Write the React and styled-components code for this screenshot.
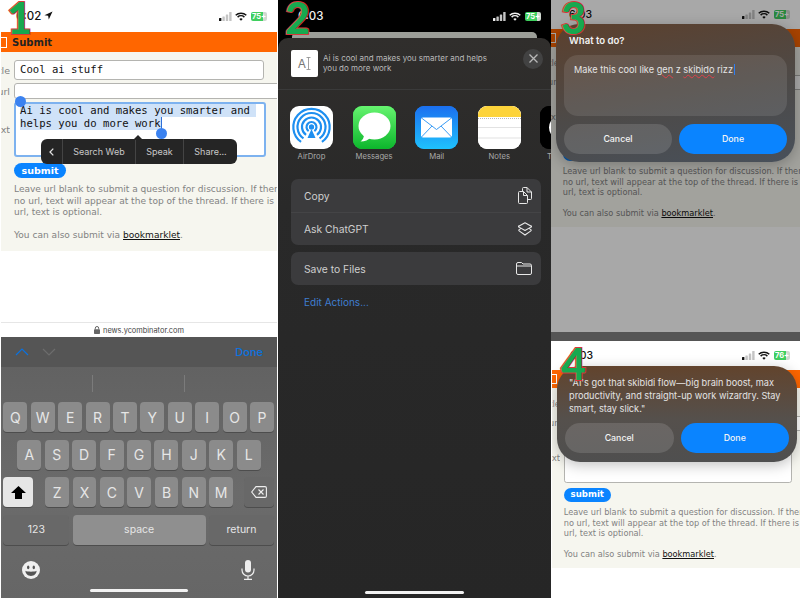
import styled, { createGlobalStyle } from 'styled-components'

const GlobalStyle = createGlobalStyle`
  html, body {
    margin: 0;
    width: 800px;
    height: 600px;
    overflow: hidden;
    background: #fff;
  }
  * { box-sizing: border-box; }
`

const ios = `Inter, "Liberation Sans", sans-serif`
const verdana = `"DejaVu Sans", Verdana, sans-serif`

const Screen = styled.div`
  display: flex;
  width: 800px;
  height: 600px;
  font-family: ${ios};
`
const Phone = styled.div`
  position: relative;
  display: flex;
  flex-direction: column;
  flex: none;
  width: ${p => p.$w}px;
  height: ${p => p.$h}px;
  margin-left: ${p => p.$left || 0}px;
  overflow: hidden;
  background: ${p => p.$bg || '#fff'};
`
const Column = styled.div`
  display: flex;
  flex-direction: column;
  flex: 1;
  height: 600px;
`
const Digit = styled.div`
  position: absolute;
  left: ${p => p.$x}px;
  top: ${p => p.$y}px;
  z-index: 5;
  font: 900 43px/43px Lato, "DejaVu Sans", sans-serif;
  color: #17a84f;
  -webkit-text-stroke: 2px #d8363a;
  paint-order: stroke fill;
`

/* status bar */
const Status = styled.div`
  display: flex;
  align-items: center;
  flex: none;
  height: ${p => p.$h}px;
  padding: 0 10px 0 ${p => p.$pad}px;
  color: ${p => p.$color};
  font-size: ${p => p.$size || 11.5}px;
  font-weight: 500;
  gap: 3px;
`
const Time = styled.span`
  margin-right: auto;
`
const Battery = styled.span`
  display: inline-block;
  width: 16px;
  height: 9px;
  border-radius: 2px;
  background: linear-gradient(90deg, #3fcf5e 78%, #cfd8d0 78%);
  color: #fff;
  font: 700 7.5px/9px ${ios};
  text-align: center;
  margin-left: 1px;
`

const Arrow = () => (
  <svg width="9" height="9" viewBox="0 0 10 10"><path d="M0.5 4.8 9.5 0.5 5.3 9.5 4.6 5.4Z" fill="currentColor" /></svg>
)
const Bars = ({ color }) => (
  <svg width="13" height="9" viewBox="0 0 13 9">
    <rect x="0" y="6" width="2.4" height="3" rx=".5" fill={color} />
    <rect x="3.4" y="4.4" width="2.4" height="4.6" rx=".5" fill="#c4c4c4" />
    <rect x="6.8" y="2.4" width="2.4" height="6.6" rx=".5" fill="#c4c4c4" />
    <rect x="10.2" y="0" width="2.4" height="9" rx=".5" fill="#c4c4c4" />
  </svg>
)
const Wifi = () => (
  <svg width="12" height="9" viewBox="0 0 12 9" fill="none" stroke="currentColor" strokeWidth="1.5">
    <path d="M.7 3.2C3.6.5 8.4.5 11.3 3.2" />
    <path d="M2.6 5.1C4.5 3.4 7.5 3.4 9.4 5.1" />
    <path d="M6 8.8 4.3 6.9C5.3 6.1 6.7 6.1 7.7 6.9Z" fill="currentColor" stroke="none" />
  </svg>
)
const StatusBar = ({ time, battery = '75+', arrow, color = '#111', barColor = '#111', h = 32, pad = 15, size }) => (
  <Status $h={h} $pad={pad} $color={color} $size={size}>
    <Time>{time} {arrow && <Arrow />}</Time>
    <Bars color={barColor} />
    <Wifi />
    <Battery>{battery}</Battery>
  </Status>
)

/* hacker news submit page */
const Viewport = styled.div`
  position: relative;
  display: flex;
  flex-direction: column;
  flex: 1;
  min-height: 0;
  background: #fff;
`
const Page = styled.div`
  zoom: ${p => p.$zoom || 1};
  flex: none;
  width: 276px;
  overflow: hidden;
  font-family: ${verdana};
`
const OrangeBar = styled.div`
  display: flex;
  align-items: center;
  height: 20px;
  background: #ff6600;
  gap: 5px;
  color: #222;
  font-size: 10px;
  font-weight: 700;
`
const LogoBox = styled.span`
  width: 7px;
  height: 11px;
  margin-left: -1px;
  border: 1px solid #fff;
  border-left: 0;
`
const FormBody = styled.div`
  display: flex;
  flex-direction: column;
  height: 199px;
  padding: 8px 0 0;
  background: #f6f6ef;
`
const Row = styled.div`
  display: flex;
  align-items: ${p => p.$align || 'center'};
  margin-bottom: 3px;
`
const FieldLabel = styled.div`
  display: flex;
  justify-content: flex-end;
  flex: none;
  width: 9px;
  margin-right: 4px;
  overflow: hidden;
  color: #828282;
  font-size: 9.5px;
  white-space: nowrap;
`
const Field = styled.div`
  position: relative;
  flex: none;
  width: ${p => p.$w}px;
  height: ${p => p.$h}px;
  padding: ${p => p.$focus ? '0 4px' : '2px 5px'};
  background: #fff;
  border: ${p => p.$focus ? '2px solid #7db2ef' : '1px solid #b4b4b0'};
  border-radius: 3px;
  color: #111;
  font: 10.62px/13px "DejaVu Sans Mono", monospace;
  white-space: pre-wrap;
`
const Selected = styled.span`
  background: #cfe2f8;
`
const Caret = styled.span`
  display: inline-block;
  width: 1px;
  height: 12px;
  margin-bottom: -2px;
  background: #2f6fd8;
`
const Handle = styled.span`
  position: absolute;
  left: ${p => p.$x}px;
  top: ${p => p.$y}px;
  width: 11px;
  height: 11px;
  border-radius: 50%;
  background: #3b82f0;
`
const Submit = styled.div`
  width: 52px;
  height: 15px;
  margin: 3px 0 0 13px;
  border-radius: 8px;
  background: #0a84ff;
  color: #fff;
  font-size: 9.5px;
  font-weight: 700;
  line-height: 15px;
  text-align: center;
`
const Help = styled.div`
  width: 276px;
  margin: 6px 0 0 13px;
  color: #828282;
  font-size: 9.05px;
  line-height: 11.5px;
  white-space: nowrap;
`
const BookLink = styled.span`
  color: #111;
  text-decoration: underline;
`

const SubmitPage = ({ zoom, title, children, focus }) => (
  <Page $zoom={zoom}>
    <OrangeBar><LogoBox />Submit</OrangeBar>
    <FormBody>
      <Row><FieldLabel>title</FieldLabel><Field $w={250} $h={20}>{title}</Field></Row>
      <Row><FieldLabel>url</FieldLabel><Field $w={270} $h={16} /></Row>
      <Row>
        <FieldLabel>text</FieldLabel>
        <Field $w={252} $h={55} $focus={focus}>{children}</Field>
      </Row>
      <Submit>submit</Submit>
      <Help>
        Leave url blank to submit a question for discussion. If there is<br />
        no url, text will appear at the top of the thread. If there is a<br />
        url, text is optional.<br /><br />
        You can also submit via <BookLink>bookmarklet</BookLink>.
      </Help>
    </FormBody>
  </Page>
)

/* text selection menu */
const Menu = styled.div`
  position: absolute;
  left: 40px;
  top: 107px;
  display: flex;
  width: 196px;
  height: 25px;
  border-radius: 6px;
  background: #252525;
  color: #c8c8c8;
  font-size: 9px;
  &::before {
    content: '';
    position: absolute;
    left: 92px;
    top: -4px;
    border: 5px solid transparent;
    border-top: 0;
    border-bottom: 5px solid #252525;
  }
`
const MenuItem = styled.div`
  display: flex;
  align-items: center;
  justify-content: center;
  width: ${p => p.$w}px;
  border-left: ${p => p.$first ? 0 : '1px solid #444'};
`

/* keyboard */
const UrlBar = styled.div`
  display: flex;
  align-items: center;
  justify-content: center;
  flex: none;
  height: 15px;
  gap: 3px;
  border-top: 1px solid #e6e6e6;
  background: #fff;
  color: #444;
  font-size: 7.4px;
`
const Keyboard = styled.div`
  flex: none;
  height: 261px;
  background: linear-gradient(#606060, #6b6b6b 60%, #666);
  display: flex;
  flex-direction: column;
`
const AccessoryBar = styled.div`
  display: flex;
  align-items: center;
  flex: none;
  height: 30px;
  padding: 0 14px 0 14px;
  gap: 13px;
  background: #555;
`
const DoneLink = styled.span`
  margin-left: auto;
  color: #0a72e0;
  font-size: 11px;
  font-weight: 500;
`
const Suggestions = styled.div`
  display: flex;
  flex: none;
  height: 35px;
  padding: 8px 0 10px 91px;
`
const SuggestCell = styled.div`
  width: 92px;
  border-left: 1px solid #7b7b7b;
`
const KeyRow = styled.div`
  display: flex;
  flex: none;
  height: 30px;
  margin-bottom: 7.5px;
  padding: 0 ${p => p.$pad || 3}px 0 ${p => p.$pad || 2.3}px;
  gap: 3.4px;
`
const Key = styled.div`
  display: flex;
  align-items: center;
  justify-content: center;
  flex: ${p => p.$w ? `none` : 1};
  width: ${p => p.$w ? `${p.$w}px` : 'auto'};
  margin: ${p => p.$margin || 0};
  border-radius: 4px;
  background: ${p => p.$bg || '#8b8b8b'};
  box-shadow: 0 1px 0 #4d4d4d;
  color: ${p => p.$color || '#e6e6e6'};
  font-size: ${p => p.$size || 14}px;
`
const KeyboardFoot = styled.div`
  display: flex;
  align-items: center;
  justify-content: space-between;
  flex: none;
  padding: 0 22px 0 21px;
  height: 34px;
  margin-top: 1px;
`
const HomeBar = styled.div`
  flex: none;
  align-self: center;
  width: ${p => p.$w}px;
  height: 3px;
  margin: ${p => p.$margin};
  border-radius: 2px;
  background: #f2f2f2;
`

const ChevronLine = ({ up, color }) => (
  <svg width="14" height="8" viewBox="0 0 14 8" fill="none" stroke={color} strokeWidth="1.2">
    <path d={up ? 'M1 7 7 1 13 7' : 'M1 1 7 7 13 1'} />
  </svg>
)
const ShiftIcon = () => (
  <svg width="15" height="13" viewBox="0 0 15 13"><path d="M7.5 0 15 7H11V13H4V7H0Z" fill="#000" /></svg>
)
const DeleteIcon = () => (
  <svg width="16" height="12" viewBox="0 0 16 12" fill="none" stroke="#eee" strokeWidth="1.1">
    <path d="M5 .6H14A1.4 1.4 0 0 1 15.4 2V10A1.4 1.4 0 0 1 14 11.4H5L.7 6Z" />
    <path d="M7.5 3.5 12.5 8.5M12.5 3.5 7.5 8.5" />
  </svg>
)
const EmojiIcon = () => (
  <svg width="18" height="18" viewBox="0 0 18 18">
    <circle cx="9" cy="9" r="9" fill="#f0f0f0" />
    <ellipse cx="6.2" cy="6.4" rx="1.2" ry="1.8" fill="#555" />
    <ellipse cx="11.8" cy="6.4" rx="1.2" ry="1.8" fill="#555" />
    <path d="M3.4 9.8C5 11 13 11 14.6 9.8 14.4 13 12 15 9 15S3.6 13 3.4 9.8Z" fill="#555" />
  </svg>
)
const MicIcon = () => (
  <svg width="14" height="20" viewBox="0 0 14 20" fill="none" stroke="#eee" strokeWidth="1.2">
    <rect x="4" y="0" width="6" height="12.5" rx="3" fill="#eee" stroke="none" />
    <path d="M1 8.5V10A6 6 0 0 0 13 10V8.5M7 16V19M3 19.4H11" />
  </svg>
)
const LockIcon = () => (
  <svg width="6" height="8" viewBox="0 0 6 8" fill="none">
    <rect x="0" y="3.2" width="6" height="4.8" rx=".8" fill="#666" />
    <path d="M1.3 3.4V2.2A1.7 1.7 0 0 1 4.7 2.2V3.4" stroke="#666" />
  </svg>
)

const letters = [['Q','W','E','R','T','Y','U','I','O','P'], ['A','S','D','F','G','H','J','K','L'], ['Z','X','C','V','B','N','M']]

const KeyboardPanel = () => (
  <Keyboard>
    <AccessoryBar>
      <ChevronLine up color="#0a72e0" />
      <ChevronLine color="#6d6d6d" />
      <DoneLink>Done</DoneLink>
    </AccessoryBar>
    <Suggestions><SuggestCell /><SuggestCell /></Suggestions>
    <KeyRow>{letters[0].map(k => <Key key={k}>{k}</Key>)}</KeyRow>
    <KeyRow $pad={16.3}>{letters[1].map(k => <Key key={k}>{k}</Key>)}</KeyRow>
    <KeyRow>
      <Key $w={30} $bg="#e6e6e6" $margin="0 8.5px 0 0"><ShiftIcon /></Key>
      {letters[2].map(k => <Key key={k}>{k}</Key>)}
      <Key $w={30} $bg="#686868" $margin="0 0 0 7.5px"><DeleteIcon /></Key>
    </KeyRow>
    <KeyRow>
      <Key $w={66} $bg="#686868" $size={10.5}>123</Key>
      <Key $bg="#8f8f8f" $size={10.5}>space</Key>
      <Key $w={65} $bg="#686868" $size={10.5}>return</Key>
    </KeyRow>
    <KeyboardFoot><EmojiIcon /><MicIcon /></KeyboardFoot>
    <HomeBar $w={98} $margin="2px 0 0" />
  </Keyboard>
)

/* share sheet */
const Sliver = styled.div`
  flex: none;
  height: 6px;
  margin: 0 14px;
  border-radius: 5px 5px 0 0;
  background: #9c9e98;
`
const Sheet = styled.div`
  display: flex;
  flex-direction: column;
  flex: 1;
  border-radius: 10px 10px 0 0;
  background: linear-gradient(#302e2c, #292929 30%, #262626);
`
const SheetHeader = styled.div`
  display: flex;
  align-items: center;
  flex: none;
  height: 52px;
  padding: 0 8px 0 13px;
  gap: 5px;
  border-bottom: 1px solid #3a3a3a;
`
const DocThumb = styled.div`
  display: flex;
  align-items: center;
  justify-content: center;
  flex: none;
  width: 27px;
  height: 27px;
  border-radius: 2px;
  background: #fff;
  color: #777;
  font-size: 12px;
`
const SheetText = styled.div`
  width: 175px;
  margin-right: auto;
  color: #b9b9b9;
  font-size: 8px;
  line-height: 9.8px;
`
const CloseButton = styled.div`
  display: flex;
  align-items: center;
  justify-content: center;
  width: 20px;
  height: 20px;
  margin-bottom: 10px;
  border-radius: 50%;
  background: #424242;
`
const AppRow = styled.div`
  display: flex;
  flex: none;
  padding: 16px 0 0 12px;
  gap: 19.6px;
`
const AppCell = styled.div`
  display: flex;
  flex-direction: column;
  align-items: center;
  flex: none;
  width: 43px;
  color: #a9a9a9;
  font-size: 7.7px;
  gap: 3px;
  white-space: nowrap;
`
const AppIcon = styled.div`
  width: 43px;
  height: 43px;
  border-radius: 9px;
  overflow: hidden;
  background: ${p => p.$bg};
  svg { display: block; }
`
const ActionGroup = styled.div`
  flex: none;
  margin: ${p => p.$top}px 10px 0 13px;
  border-radius: 7px;
  background: #3b3b3d;
`
const ActionRow = styled.div`
  display: flex;
  align-items: center;
  justify-content: space-between;
  height: 33px;
  padding: 0 9px 0 13px;
  border-top: ${p => p.$line ? '1px solid #444446' : 0};
  color: #cfcfcf;
  font-size: 10.3px;
`
const EditActions = styled.div`
  margin: 11px 0 0 26px;
  color: #3f7ed0;
  font-size: 10px;
`

const polar = (r, deg) => {
  const a = (deg * Math.PI) / 180
  return `${(21.5 + r * Math.cos(a)).toFixed(2)} ${(21 + r * Math.sin(a)).toFixed(2)}`
}
const ring = r => `M${polar(r, 125)}A${r} ${r} 0 1 1 ${polar(r, 55)}`

const AirDropIcon = () => (
  <svg width="43" height="43" viewBox="0 0 43 43" fill="none" stroke="#1e8ff0" strokeWidth="2.2">
    {[5, 9.5, 14, 18.2].map(r => <path key={r} d={ring(r)} />)}
    <circle cx="21.5" cy="21" r="2.4" fill="#1e8ff0" stroke="none" />
    <path d="M21.5 21 15 35H28Z" fill="#fff" stroke="none" />
    <circle cx="21.5" cy="21" r="2.6" fill="#1e8ff0" stroke="none" />
    <path d="M21.5 23 17.5 32H25.5Z" fill="#1e8ff0" stroke="none" />
  </svg>
)
const MessagesIcon = () => (
  <svg width="43" height="43" viewBox="0 0 43 43">
    <defs><linearGradient id="msg" x1="0" y1="0" x2="0" y2="1"><stop offset="0" stopColor="#66f46f" /><stop offset="1" stopColor="#0cb62c" /></linearGradient></defs>
    <rect width="43" height="43" fill="url(#msg)" />
    <ellipse cx="21.5" cy="20" rx="16" ry="13.5" fill="#fff" />
    <path d="M11 28C11 32 9.500 34 7.500 35.500 12 35.500 15.500 34 18 31Z" fill="#fff" />
  </svg>
)
const MailIcon = () => (
  <svg width="43" height="43" viewBox="0 0 43 43">
    <defs><linearGradient id="mail" x1="0" y1="0" x2="0" y2="1"><stop offset="0" stopColor="#1b6ff0" /><stop offset="1" stopColor="#1fc2fd" /></linearGradient></defs>
    <rect width="43" height="43" fill="url(#mail)" />
    <rect x="6" y="11.500" width="31" height="20" rx="2" fill="#fff" />
    <path d="M6.500 12 21.500 23.500 36.500 12M6.500 31 17 20M36.500 31 26 20" fill="none" stroke="#3a9cf5" strokeWidth="1" />
  </svg>
)
const NotesIcon = () => (
  <svg width="43" height="43" viewBox="0 0 43 43">
    <rect width="43" height="43" fill="#fff" />
    <rect width="43" height="11" fill="#fdd33a" />
    <path d="M0 12.500H43" stroke="#999" strokeWidth=".7" strokeDasharray="1 1" />
    <path d="M0 21.500H43M0 32H43" stroke="#e2e2e2" strokeWidth="1.200" />
  </svg>
)
const ThreadsIcon = () => (
  <svg width="43" height="43" viewBox="0 0 43 43" fill="none">
    <rect width="43" height="43" fill="#000" />
    <circle cx="21.500" cy="21.500" r="11" stroke="#fff" strokeWidth="3" />
  </svg>
)
const CopyIcon = () => (
  <svg width="14" height="17" viewBox="0 0 14 17" fill="none" stroke="#e8e8e8" strokeWidth="1">
    <path d="M4.500 4V1.500A1 1 0 0 1 5.500 .5H9L13.500 5V11.500A1 1 0 0 1 12.500 12.500H9.500" />
    <path d="M9 .5V5H13.500" />
    <path d="M1.500 4.500H5.500L9.500 8.500V15.500A1 1 0 0 1 8.500 16.500H1.500A1 1 0 0 1 .5 15.500V5.500A1 1 0 0 1 1.500 4.500Z" />
    <path d="M5.500 4.500V8.500H9.500" />
  </svg>
)
const StackIcon = () => (
  <svg width="14" height="14" viewBox="0 0 15 15" fill="none" stroke="#e8e8e8" strokeWidth="1.200" strokeLinejoin="round">
    <path d="M7.500 .8 13.800 4.200A.6.6 0 0 1 13.800 5.500L7.500 9 1.200 5.500A.6.6 0 0 1 1.200 4.200Z" />
    <path d="M3.200 6.800 1.200 8.200A.8.8 0 0 0 1.200 9.500L7.500 14 13.800 9.500A.8.8 0 0 0 13.800 8.200L11.800 6.800" />
  </svg>
)
const FolderIcon = () => (
  <svg width="16" height="13" viewBox="0 0 16 13" fill="none" stroke="#e8e8e8" strokeWidth="1">
    <path d="M.5 2A1.500 1.500 0 0 1 2 .5H5.500L7 2H14A1.500 1.500 0 0 1 15.500 3.500V11A1.500 1.500 0 0 1 14 12.500H2A1.500 1.500 0 0 1 .5 11Z" />
    <path d="M.5 4H15.500" />
  </svg>
)
const CloseIcon = () => (
  <svg width="9" height="9" viewBox="0 0 9 9" stroke="#b8b8b8" strokeWidth="1.300"><path d="M.5 .5 8.500 8.500M8.500 .5 .5 8.500" /></svg>
)
const CursorMark = () => (
  <svg width="5" height="13" viewBox="0 0 5 13" fill="none" stroke="#888" strokeWidth=".8"><path d="M.5 .5H4.500M2.500 .5V12.500M.5 12.500H4.500" /></svg>
)

/* prompt dialog */
const Dim = styled.div`
  position: absolute;
  inset: 0;
  background: rgba(0, 0, 0, .34);
`
const Dialog = styled.div`
  position: absolute;
  left: ${p => p.$x}px;
  top: ${p => p.$y}px;
  width: ${p => p.$w}px;
  height: ${p => p.$h}px;
  padding: ${p => p.$pad};
  border-radius: 23px;
  background: ${p => p.$bg};
  box-shadow: 0 3px 14px rgba(0, 0, 0, .25);
  color: #e4e4e4;
  font-size: 9.2px;
  display: flex;
  flex-direction: column;
`
const DialogTitle = styled.div`
  padding-left: 5px;
  color: #f2f2f2;
  font-weight: 600;
  font-size: 9.6px;
  line-height: 12px;
`
const PromptBox = styled.div`
  height: 61px;
  margin-top: 8px;
  padding: 9px 10px;
  border-radius: 14px;
  background: rgba(255, 255, 255, .1);
  line-height: 12px;
`
const Wavy = styled.span`
  text-decoration: underline wavy #e0404a 1px;
`
const PromptCaret = styled.span`
  display: inline-block;
  width: 1px;
  height: 11px;
  margin: 0 0 -2px 1px;
  background: #2f7df0;
`
const DialogText = styled.div`
  padding-left: 4px;
  line-height: 12.8px;
`
const ButtonRow = styled.div`
  display: flex;
  gap: 7px;
  margin-top: auto;
`
const DialogButton = styled.div`
  flex: 1;
  height: 30px;
  border-radius: 15px;
  background: ${p => p.$primary ? '#0a84ff' : 'rgba(255, 255, 255, .13)'};
  color: #f4f4f4;
  font-size: 8.8px;
  font-weight: 500;
  line-height: 30px;
  text-align: center;
`
const Band = styled.div`
  flex: none;
  height: 9px;
  background: #555;
`

export default function App() {
  return (
    <Screen>
      <GlobalStyle />
      <Phone $w={276} $h={598} $left={1}>
        <Digit $x={6} $y={-4}>1</Digit>
        <StatusBar time="6:02" arrow />
        <Viewport>
          <SubmitPage title="Cool ai stuff" focus>
            <Handle $x={-1} $y={-8} />
            <Selected>Ai is cool and makes you smarter and helps you do more work</Selected><Caret />
            <Handle $x={140} $y={24} />
          </SubmitPage>
          <Menu>
            <MenuItem $w={21} $first>
              <svg width="5" height="8" viewBox="0 0 5 8" fill="none" stroke="#e0e0e0" strokeWidth="1.300"><path d="M4.300 .6 1 4 4.300 7.400" /></svg>
            </MenuItem>
            <MenuItem $w={73}>Search Web</MenuItem>
            <MenuItem $w={48}>Speak</MenuItem>
            <MenuItem $w={54}>Share...</MenuItem>
          </Menu>
        </Viewport>
        <UrlBar><LockIcon />news.ycombinator.com</UrlBar>
        <KeyboardPanel />
      </Phone>

      <Phone $w={273} $h={598} $left={1} $bg="#000">
        <Digit $x={7} $y={-4}>2</Digit>
        <StatusBar time="6:03" color="#f2f2f2" barColor="#f2f2f2" pad={20} />
        <Sliver />
        <Sheet>
          <SheetHeader>
            <DocThumb>A<CursorMark /></DocThumb>
            <SheetText>Ai is cool and makes you smarter and helps you do more work</SheetText>
            <CloseButton><CloseIcon /></CloseButton>
          </SheetHeader>
          <AppRow>
            <AppCell><AppIcon $bg="#fff"><AirDropIcon /></AppIcon>AirDrop</AppCell>
            <AppCell><AppIcon $bg="#2bd24b"><MessagesIcon /></AppIcon>Messages</AppCell>
            <AppCell><AppIcon $bg="#1b8cf5"><MailIcon /></AppIcon>Mail</AppCell>
            <AppCell><AppIcon $bg="#fff"><NotesIcon /></AppIcon>Notes</AppCell>
            <AppCell><AppIcon $bg="#000"><ThreadsIcon /></AppIcon>Threads</AppCell>
          </AppRow>
          <ActionGroup $top={18}>
            <ActionRow>Copy<CopyIcon /></ActionRow>
            <ActionRow $line>Ask ChatGPT<StackIcon /></ActionRow>
          </ActionGroup>
          <ActionGroup $top={7}>
            <ActionRow>Save to Files<FolderIcon /></ActionRow>
          </ActionGroup>
          <EditActions>Edit Actions...</EditActions>
          <HomeBar $w={99} $margin="auto 0 4px" />
        </Sheet>
      </Phone>

      <Column>
        <Phone $w={249} $h={341} $left={0}>
          <Digit $x={10} $y={-4}>3</Digit>
          <Viewport>
            <StatusBar time="6:03" h={29} pad={18} size={10.5} />
            <SubmitPage zoom={0.905} title="" />
            <Dim />
            <Dialog $x={5} $y={24} $w={239} $h={138} $pad="11px 8px 8px 8px" $bg="linear-gradient(170deg, #5c402d, #4d4a48 55%, #48505a 100%)">
              <DialogTitle>What to do?</DialogTitle>
              <PromptBox>Make this cool like <Wavy>gen</Wavy> z <Wavy>skibido</Wavy> rizz<PromptCaret /></PromptBox>
              <ButtonRow>
                <DialogButton>Cancel</DialogButton>
                <DialogButton $primary>Done</DialogButton>
              </ButtonRow>
            </Dialog>
          </Viewport>
          <Band />
        </Phone>
        <Phone $w={248} $h={259} $left={1}>
          <Digit $x={9} $y={1}>4</Digit>
          <StatusBar time="6:03" battery="76+" h={29} pad={18} size={10.5} />
          <SubmitPage zoom={0.905} title="" />
          <Dialog $x={5} $y={25} $w={240} $h={96} $pad="11px 8px 9px 8px" $bg="linear-gradient(#62442d, #55504c 55%, #4f4f4f)">
            <DialogText>"AI's got that skibidi flow—big brain boost, max productivity, and straight-up work wizardry. Stay smart, stay slick."</DialogText>
            <ButtonRow>
              <DialogButton>Cancel</DialogButton>
              <DialogButton $primary>Done</DialogButton>
            </ButtonRow>
          </Dialog>
        </Phone>
      </Column>
    </Screen>
  )
}
